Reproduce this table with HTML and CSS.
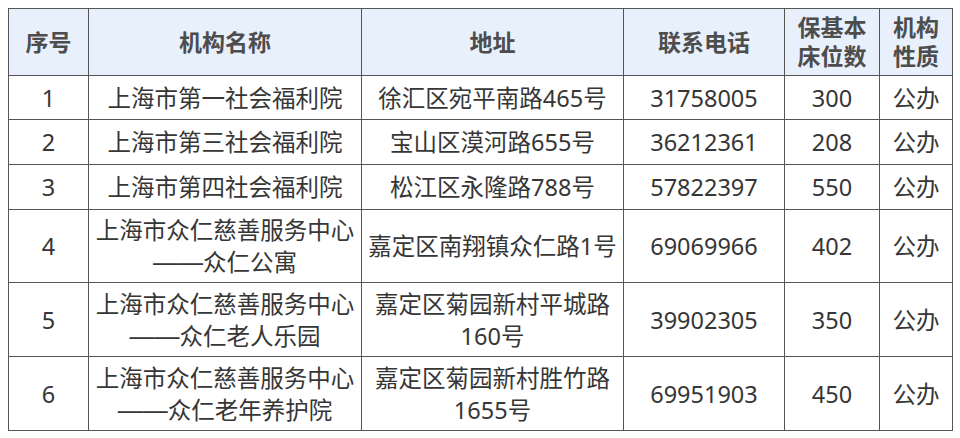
FILE: index.html
```html
<!DOCTYPE html>
<html lang="zh-CN">
<head>
<meta charset="utf-8">
<title>机构列表</title>
<link rel="stylesheet" href="styles.css">
</head>
<body>
<table class="tbl">
  <colgroup>
    <col class="c1"><col class="c2"><col class="c3"><col class="c4"><col class="c5"><col class="c6">
  </colgroup>
  <thead>
    <tr>
      <th>序号</th>
      <th>机构名称</th>
      <th>地址</th>
      <th>联系电话</th>
      <th>保基本<br>床位数</th>
      <th>机构<br>性质</th>
    </tr>
  </thead>
  <tbody>
    <tr class="short">
      <td>1</td><td>上海市第一社会福利院</td><td>徐汇区宛平南路465号</td><td>31758005</td><td>300</td><td>公办</td>
    </tr>
    <tr class="short s2">
      <td>2</td><td>上海市第三社会福利院</td><td>宝山区漠河路655号</td><td>36212361</td><td>208</td><td>公办</td>
    </tr>
    <tr class="short s2">
      <td>3</td><td>上海市第四社会福利院</td><td>松江区永隆路788号</td><td>57822397</td><td>550</td><td>公办</td>
    </tr>
    <tr class="tall">
      <td>4</td><td>上海市众仁慈善服务中心<br><span class="dash">——</span>众仁公寓</td><td>嘉定区南翔镇众仁路1号</td><td>69069966</td><td>402</td><td>公办</td>
    </tr>
    <tr class="tall t2">
      <td>5</td><td>上海市众仁慈善服务中心<br><span class="dash">——</span>众仁老人乐园</td><td>嘉定区菊园新村平城路<br>160号</td><td>39902305</td><td>350</td><td>公办</td>
    </tr>
    <tr class="tall t2">
      <td>6</td><td>上海市众仁慈善服务中心<br><span class="dash">——</span>众仁老年养护院</td><td>嘉定区菊园新村胜竹路<br>1655号</td><td>69951903</td><td>450</td><td>公办</td>
    </tr>
  </tbody>
</table>
</body>
</html>
```

FILE: styles.css
```css
html, body {
  margin: 0;
  padding: 0;
  background: #ffffff;
}
body {
  padding: 8px;
  font-family: "Noto Sans", "Noto Sans CJK SC", sans-serif;
}
.tbl {
  border-collapse: collapse;
  table-layout: fixed;
  width: 944px;
  border: 1px solid #555555;
}
.c1 { width: 80px; }
.c2 { width: 273px; }
.c3 { width: 262px; }
.c4 { width: 161px; }
.c5 { width: 95px; }
.c6 { width: 73px; }

.tbl th,
.tbl td {
  border: 1px solid #555555;
  text-align: center;
  vertical-align: middle;
  padding: 4px 2px;
  white-space: nowrap;
  box-sizing: border-box;
}
.tbl th {
  background: #e8f0fc;
  color: #4d4d4d;
  font-weight: 700;
  font-size: 23px;
  line-height: 29px;
  height: 67px;
}
.tbl td {
  color: #363636;
  font-weight: 400;
  font-size: 23.5px;
  line-height: 32px;
}
.dash {
  font-family: "Liberation Sans", sans-serif;
  font-size: 25px;
}
.short td { height: 44px; }
.short.s2 td { height: 45px; }
.tall td { height: 72px; }
.tall.t2 td { height: 74px; }
```
